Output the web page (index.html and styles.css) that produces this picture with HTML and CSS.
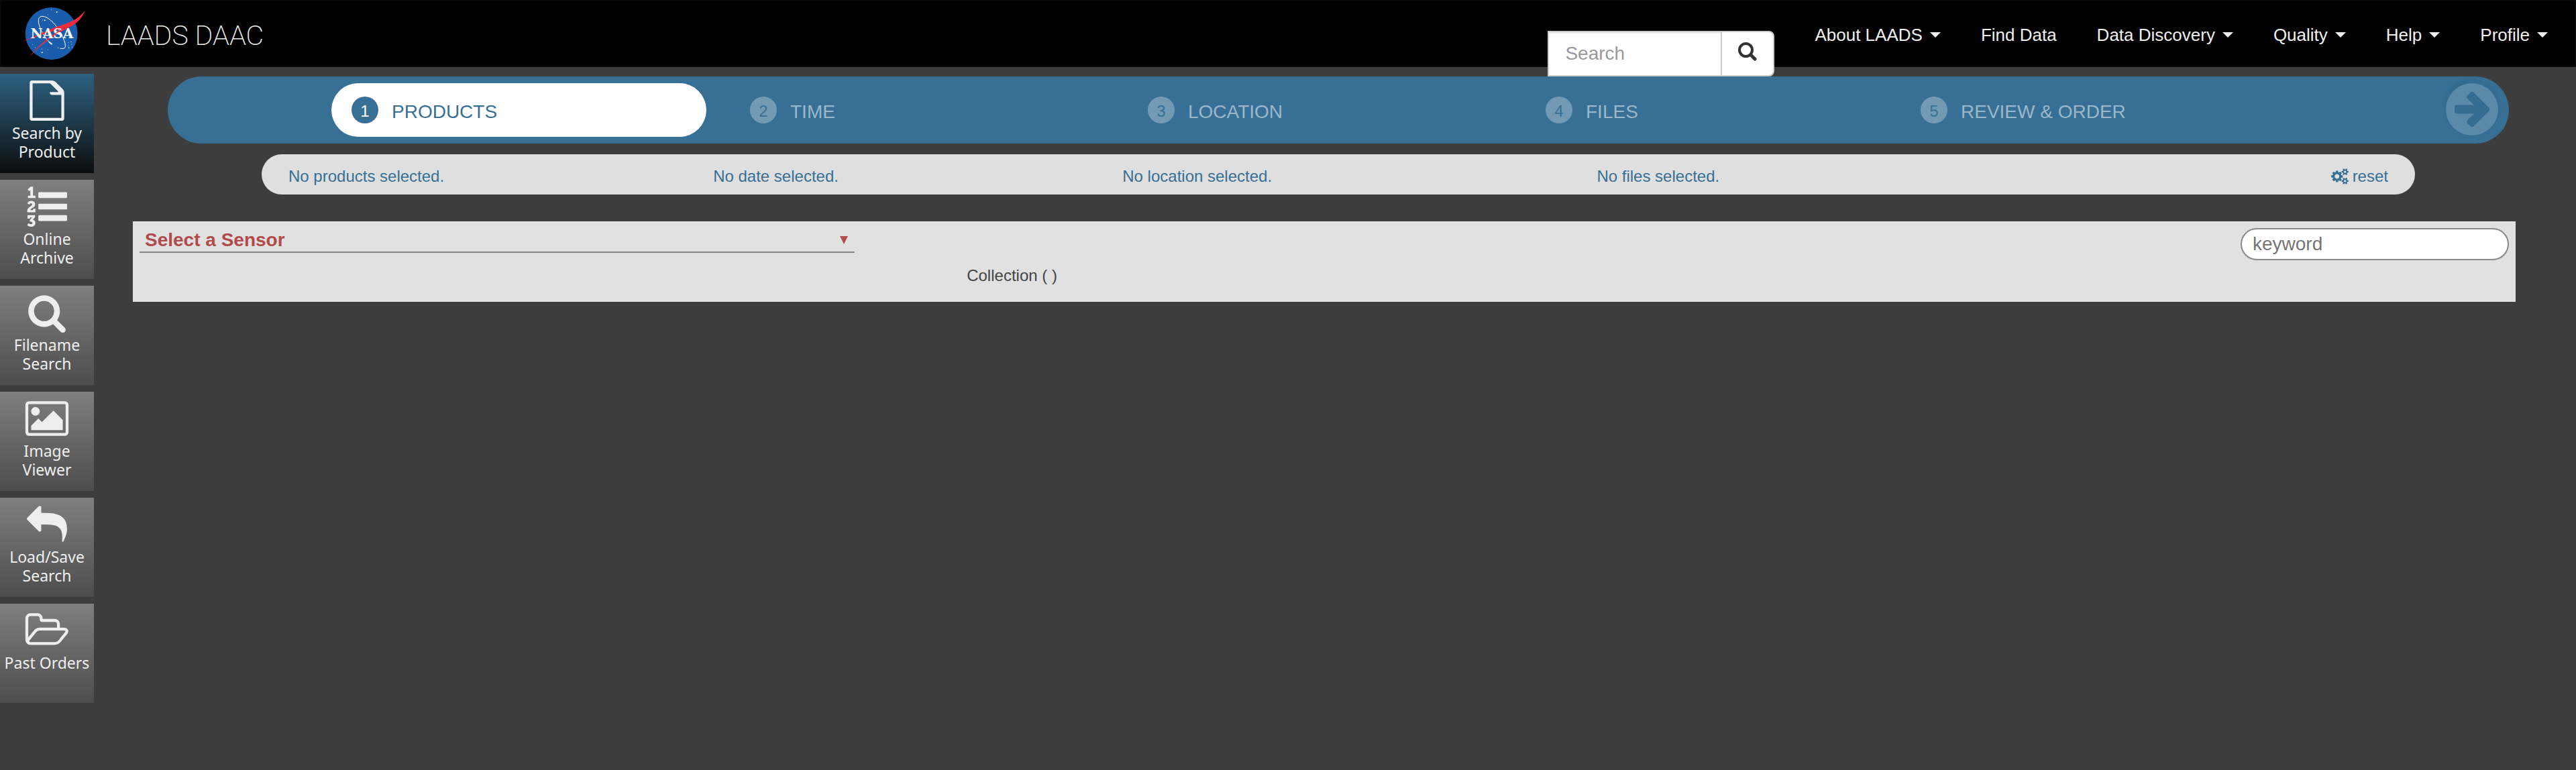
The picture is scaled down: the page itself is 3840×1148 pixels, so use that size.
FILE: index.html
```html
<!DOCTYPE html>
<html lang="en">
<head>
<meta charset="utf-8">
<title>LAADS DAAC</title>
<link rel="stylesheet" href="styles.css">
</head>
<body>
<header class="site-header">
  <a class="brand" href="#">
    <svg class="brand-logo" viewBox="0 0 330 288" aria-hidden="true">
      <circle cx="152" cy="144" r="117" fill="#1b5dad"/>
      <g fill="#fff">
        <circle cx="176" cy="48" r="3"/><circle cx="152" cy="38" r="1.500"/><circle cx="136" cy="60" r="1.500"/><circle cx="131" cy="71" r="1.500"/><circle cx="122" cy="85" r="3"/><circle cx="112" cy="84" r="1.500"/><circle cx="110" cy="229" r="3"/><circle cx="109" cy="213" r="1.500"/><circle cx="68" cy="194" r="1.500"/><circle cx="80" cy="206" r="1.500"/><circle cx="240" cy="181" r="2"/><circle cx="230" cy="208" r="2.500"/><circle cx="243" cy="192" r="1.500"/><circle cx="228" cy="184" r="1.500"/><circle cx="136" cy="216" r="1.500"/><circle cx="182" cy="208" r="2"/><circle cx="245" cy="205" r="1.500"/><circle cx="228" cy="198" r="1.500"/>
      </g>
      <path d="M152 193C118 160 92 112 94 84C97 52 138 68 168 104C196 138 220 190 213 206C210 213 200 212 190 210" fill="none" stroke="#fff" stroke-width="3"/>
      <path d="M141 181l14 11" stroke="#fff" stroke-width="5"/>
      <path d="M21 180C80 156 115 138 172 115C230 96 270 84 303 39C288 82 256 106 220 122C150 158 100 198 53 249C100 190 150 150 206 122C140 136 80 160 21 180Z" fill="#ee2c3e"/>
      <text class="brand-mark" x="154" y="166" text-anchor="middle">NASA</text>
      <path d="M160 150L206 122L232 112" fill="none" stroke="#ee2c3e" stroke-width="4"/>
    </svg>
    <span class="brand-name">LAADS DAAC</span>
  </a>
  <form class="site-search" role="search">
    <input class="site-search-input" type="text" placeholder="Search" aria-label="Search">
    <button class="site-search-button" type="button" aria-label="Submit search">
      <svg viewBox="0 0 28 28" width="28" height="28" fill="none" stroke="#333"><circle cx="11.500" cy="11.500" r="9.500" stroke-width="4"/><path d="M19 19l6 6" stroke-width="5" stroke-linecap="round"/></svg>
    </button>
  </form>
  <nav class="site-nav" aria-label="Main">
    <a class="site-nav-link" href="#">About LAADS<span class="caret"></span></a>
    <a class="site-nav-link" href="#">Find Data</a>
    <a class="site-nav-link" href="#">Data Discovery<span class="caret"></span></a>
    <a class="site-nav-link" href="#">Quality<span class="caret"></span></a>
    <a class="site-nav-link" href="#">Help<span class="caret"></span></a>
    <a class="site-nav-link" href="#">Profile<span class="caret"></span></a>
  </nav>
</header>

<div class="page">
  <nav class="sidebar" aria-label="Tools">
    <a class="tool tool-active" href="#">
      <svg class="tool-icon" viewBox="0 0 1792 1792"><path d="M1596 380q28 28 48 76t20 88v1152q0 40-28 68t-68 28h-1344q-40 0-68-28t-28-68v-1600q0-40 28-68t68-28h896q40 0 88 20t76 48zm-572-244v376h376q-10-29-22-41l-313-313q-12-12-41-22zm512 1528v-1024h-416q-40 0-68-28t-28-68v-416h-768v1536h1280z"/></svg>
      <span>Search by Product</span>
    </a>
    <a class="tool" href="#">
      <svg class="tool-icon" viewBox="0 0 1792 1792"><path d="M381 1620q0 80-54.500 126t-135.500 46q-106 0-172-66l57-88q49 45 106 45 29 0 50.500-14.500t21.500-42.500q0-64-105-56l-26-56q8-10 32.500-43.500t42.500-54 37-38.500v-1q-16 0-48.500 1t-48.500 1v53h-106v-152h333v88l-95 115q51 12 81 49t30 88zm2-627v159h-362q-6-36-6-54 0-51 23.500-93t56.500-68 66-47.500 56.500-43.500 23.500-45q0-25-14.500-38.500t-39.500-13.500q-46 0-81 58l-85-59q24-51 71.500-79.500t105.500-28.500q73 0 123 41.500t50 112.500q0 50-34 91.500t-75 64.500-75.500 50.500-35.500 52.500h127v-60h105zm1409 319v192q0 13-9.500 22.500t-22.500 9.500h-1216q-13 0-22.500-9.500t-9.500-22.500v-192q0-14 9-23t23-9h1216q13 0 22.500 9.500t9.500 22.500zm-1408-899v99h-335v-99h107q0-41 .5-121.500t.5-121.500v-12h-2q-8 17-50 54l-71-76 136-127h106v404h108zm1408 387v192q0 13-9.500 22.500t-22.500 9.500h-1216q-13 0-22.500-9.500t-9.500-22.500v-192q0-14 9-23t23-9h1216q13 0 22.500 9.500t9.500 22.500zm0-512v192q0 13-9.500 22.500t-22.500 9.500h-1216q-13 0-22.500-9.500t-9.500-22.500v-192q0-13 9.500-22.500t22.500-9.500h1216q13 0 22.500 9.500t9.500 22.500z"/></svg>
      <span>Online Archive</span>
    </a>
    <a class="tool" href="#">
      <svg class="tool-icon" viewBox="0 0 1792 1792"><path d="M1216 832q0-185-131.500-316.500t-316.500-131.500-316.500 131.500-131.500 316.500 131.500 316.500 316.500 131.500 316.500-131.500 131.500-316.500zm512 832q0 52-38 90t-90 38q-54 0-90-38l-343-342q-179 124-399 124-143 0-273.500-55.500t-225-150-150-225-55.500-273.500 55.500-273.500 150-225 225-150 273.500-55.500 273.500 55.500 225 150 150 225 55.500 273.500q0 220-124 399l343 343q37 37 37 90z"/></svg>
      <span>Filename Search</span>
    </a>
    <a class="tool" href="#">
      <svg class="tool-icon" viewBox="0 0 1792 1792"><path d="M576 576q0 80-56 136t-136 56-136-56-56-136 56-136 136-56 136 56 56 136zm1024 384v448h-1408v-192l320-320 160 160 512-512zm96-704h-1600q-13 0-22.500 9.500t-9.500 22.500v1216q0 13 9.500 22.500t22.500 9.500h1600q13 0 22.500-9.500t9.500-22.500v-1216q0-13-9.500-22.500t-22.500-9.500zm160 32v1216q0 66-47 113t-113 47h-1600q-66 0-113-47t-47-113v-1216q0-66 47-113t113-47h1600q66 0 113 47t47 113z"/></svg>
      <span>Image Viewer</span>
    </a>
    <a class="tool" href="#">
      <svg class="tool-icon" viewBox="0 0 1792 1792"><path d="M1792 1120q0 166-127 451-3 7-10.500 24t-13.500 30-13 22q-12 17-28 17-15 0-23.500-10t-8.500-25q0-9 2.500-26.500t2.500-23.500q5-68 5-123 0-101-17.500-181t-48.500-138.500-80-101-105.500-69.500-133-42.500-154-21.500-175.500-6h-224v256q0 26-19 45t-45 19-45-19l-512-512q-19-19-19-45t19-45l512-512q19-19 45-19t45 19 19 45v256h224q713 0 875 403 53 134 53 333z"/></svg>
      <span>Load/Save Search</span>
    </a>
    <a class="tool" href="#">
      <svg class="tool-icon" viewBox="0 0 1792 1792"><path d="M1717 931q0-35-53-35h-1088q-40 0-85.500 21.500t-71.500 52.500l-294 363q-18 24-18 40 0 35 53 35h1088q40 0 86-22t71-53l294-363q18-22 18-39zm-1141-163h768v-160q0-40-28-68t-68-28h-576q-40 0-68-28t-28-68v-64q0-40-28-68t-68-28h-320q-40 0-68 28t-28 68v853l256-315q44-53 116-87.500t140-34.500zm1269 163q0 62-46 120l-295 363q-43 53-116 87.500t-140 34.500h-1088q-92 0-158-66t-66-158v-960q0-92 66-158t158-66h320q92 0 158 66t66 158v32h544q92 0 158 66t66 158v160h192q54 0 99 24.500t67 70.500q15 32 15 68z"/></svg>
      <span>Past Orders</span>
    </a>
  </nav>

  <main class="content">
    <div class="steps">
      <a class="step step-active" href="#"><span class="step-number">1</span><span class="step-label">PRODUCTS</span></a>
      <a class="step" href="#"><span class="step-number">2</span><span class="step-label">TIME</span></a>
      <a class="step" href="#"><span class="step-number">3</span><span class="step-label">LOCATION</span></a>
      <a class="step" href="#"><span class="step-number">4</span><span class="step-label">FILES</span></a>
      <a class="step" href="#"><span class="step-number">5</span><span class="step-label">REVIEW &amp; ORDER</span></a>
      <button class="step-next" type="button" aria-label="Next step">
        <svg viewBox="0 0 1536 1536" width="78" height="78"><circle cx="768" cy="768" r="768" fill="#5b89a8"/><path fill="#346c92" d="M1285 768q0-27-18-45l-91-91-362-362q-18-18-45-18t-45 18l-91 91q-18 18-18 45t18 45l189 189h-502q-26 0-45 19t-19 45v128q0 26 19 45t45 19h502l-189 189q-19 19-19 45t19 45l91 91q18 18 45 18t45-18l362-362 91-91q18-18 18-45z"/></svg>
      </button>
    </div>

    <div class="summary">
      <span>No products selected.</span>
      <span>No date selected.</span>
      <span>No location selected.</span>
      <span>No files selected.</span>
      <a class="reset" href="#"><svg viewBox="-64 0 1920 1792" width="26" height="24"><path d="M832 896q0-106-75-181t-181-75-181 75-75 181 75 181 181 75 181-75 75-181zm768 512q0-52-38-90t-90-38-90 38-38 90q0 53 37.500 90.500t90.500 37.500 90.500-37.500 37.500-90.500zm0-1024q0-52-38-90t-90-38-90 38-38 90q0 53 37.500 90.500t90.500 37.500 90.500-37.500 37.500-90.500zm-384 421v185q0 10-7 19.500t-16 10.500l-155 24q-11 35-32 76 34 48 90 115 7 11 7 20 0 12-7 19-23 30-82.500 89.500t-78.500 59.500q-11 0-21-7l-115-90q-37 19-77 31-11 108-23 155-7 24-30 24h-186q-11 0-20-7.500t-10-17.500l-23-153q-34-10-75-31l-118 89q-7 7-20 7-11 0-21-8-144-133-144-160 0-9 7-19 10-14 41-53t47-61q-23-44-35-82l-152-24q-10-1-17-9.500t-7-19.500v-185q0-10 7-19.500t16-10.500l155-24q11-35 32-76-34-48-90-115-7-11-7-20 0-12 7-20 22-30 82-89t79-59q11 0 21 7l115 90q34-18 77-32 11-108 23-154 7-24 30-24h186q11 0 20 7.500t10 17.500l23 153q34 10 75 31l118-89q8-7 20-7 11 0 21 8 144 133 144 160 0 8-7 19-12 16-42 54t-45 60q23 48 34 82l152 23q10 2 17 10.500t7 19.500zm640 533v140q0 16-149 31-12 27-30 52 51 113 51 138 0 4-4 7-122 71-124 71-8 0-46-47t-52-68q-20 2-30 2t-30-2q-14 21-52 68t-46 47q-2 0-124-71-4-3-4-7 0-25 51-138-18-25-30-52-149-15-149-31v-140q0-16 149-31 13-29 30-52-51-113-51-138 0-4 4-7 4-2 35-20t59-34 30-16q8 0 46 46.500t52 67.500q20-2 30-2t30 2q51-71 92-112l6-2q4 0 124 70 4 3 4 7 0 25-51 138 17 23 30 52 149 15 149 31zm0-1024v140q0 16-149 31-12 27-30 52 51 113 51 138 0 4-4 7-122 71-124 71-8 0-46-47t-52-68q-20 2-30 2t-30-2q-14 21-52 68t-46 47q-2 0-124-71-4-3-4-7 0-25 51-138-18-25-30-52-149-15-149-31v-140q0-16 149-31 13-29 30-52-51-113-51-138 0-4 4-7 4-2 35-20t59-34 30-16q8 0 46 46.500t52 67.500q20-2 30-2t30 2q51-71 92-112l6-2q4 0 124 70 4 3 4 7 0 25-51 138 17 23 30 52 149 15 149 31z"/></svg>reset</a>
    </div>

    <section class="panel">
      <div class="panel-controls">
        <div class="sensor">
          <select class="sensor-select" aria-label="Sensor"><option>Select a Sensor</option></select>
          <svg class="sensor-arrow" viewBox="0 0 12 12" width="12" height="12" aria-hidden="true"><path d="M0 0h12L6 12z"/></svg>
        </div>
        <input class="keyword" type="text" placeholder="keyword" aria-label="keyword">
      </div>
      <p class="collection">Collection ( )</p>
    </section>
  </main>
</div>
</body>
</html>
```

FILE: styles.css
```css
* {
  box-sizing: border-box;
}

body {
  margin: 0;
  background: #3d3d3d;
  color: #444;
  font-family: "Liberation Sans", Arial, sans-serif;
  font-size: 24px;
}

a {
  color: inherit;
  text-decoration: none;
}

input,
button,
select {
  margin: 0;
  font: inherit;
}

svg {
  display: block;
}

/* Header */
.site-header {
  display: flex;
  align-items: flex-start;
  height: 100px;
  padding: 0 10px 0 24px;
  border: 2px solid #080808;
  background: #000;
}

.brand {
  display: flex;
  align-items: center;
  gap: 22px;
  margin-right: auto;
  color: #eee;
}

.brand-logo {
  width: 110px;
  height: 96px;
}

.brand-mark {
  fill: #fff;
  font-family: "DejaVu Serif", serif;
  font-size: 60px;
  font-weight: bold;
}

.brand-name {
  padding-top: 6px;
  font-family: Roboto, "Liberation Sans", sans-serif;
  font-size: 41px;
  font-weight: 200;
  white-space: nowrap;
}

.site-search {
  display: flex;
  position: relative;
  margin: 44px 30px 0 0;
}

.site-search-input {
  width: 260px;
  height: 68px;
  padding: 0 24px;
  border: 2px solid #ccc;
  border-radius: 0;
  background: #fff;
  box-shadow: inset 0 2px 2px rgba(0, 0, 0, 0.08);
  color: #555;
  font-size: 28px;
}

.site-search-input::placeholder {
  color: #999;
  opacity: 1;
}

.site-search-button {
  display: flex;
  align-items: center;
  justify-content: center;
  width: 80px;
  height: 68px;
  margin-left: -2px;
  padding: 0 0 6px;
  border: 2px solid #ccc;
  border-radius: 0 8px 8px 0;
  background: #fff;
}

.site-nav {
  display: flex;
}

.site-nav-link {
  display: flex;
  align-items: center;
  gap: 11px;
  padding: 30px 30px 26px;
  color: #eee;
  font-size: 26px;
  line-height: 40px;
  white-space: nowrap;
}

.caret {
  border: 8px solid transparent;
  border-top-color: #eee;
  border-bottom: 0;
}

/* Page columns */
.page {
  display: flex;
  align-items: flex-start;
}

.sidebar {
  display: flex;
  flex: none;
  flex-direction: column;
  gap: 10px;
  width: 140px;
  padding-top: 10px;
}

.tool {
  display: flex;
  flex-direction: column;
  align-items: center;
  gap: 4px;
  height: 148px;
  padding: 10px 16px 0;
  background: linear-gradient(#7f7f7f, #4d4d4d);
  color: #eee;
  font-family: "Noto Sans", Tahoma, sans-serif;
  font-size: 23px;
  line-height: 28px;
  text-align: center;
}

.tool:last-child {
  padding-right: 0;
  padding-left: 0;
}

.tool-active {
  background: linear-gradient(#2d6080, #1f3c4e 45%, #0d0d0d);
}

.tool-icon {
  flex: none;
  width: 60px;
  height: 60px;
  overflow: visible;
  fill: #eee;
}

.content {
  flex: 1;
  min-width: 0;
  padding: 14px 90px 0 58px;
}

/* Step bar */
.steps {
  display: grid;
  position: relative;
  grid-template-columns: 244fr 594fr 593fr 593fr 559fr 907fr;
  align-items: center;
  height: 100px;
  margin: 0 10px 0 52px;
  border-radius: 50px;
  background: #376f95;
}

.step {
  display: flex;
  align-items: center;
  gap: 20px;
  height: 80px;
  padding-left: 30px;
  color: #9bb7ca;
  font-size: 28px;
  line-height: 40px;
  white-space: nowrap;
}

.step-active {
  grid-column-start: 2;
  margin-right: 35px;
  border-radius: 40px;
  background: #fff;
  color: #376f95;
}

.step-number {
  width: 40px;
  height: 40px;
  padding-top: 2px;
  border-radius: 50%;
  background: #739ab4;
  color: #376f95;
  font-size: 24px;
  text-align: center;
}

.step-label {
  padding-top: 6px;
}

.step-active .step-number {
  background: #376f95;
  color: #fff;
}

.step-next {
  position: absolute;
  top: 10px;
  right: 16px;
  padding: 0;
  border: 0;
  border-radius: 50%;
  background: none;
  box-shadow: 0 -4px 4px 2px #346b91;
}

/* Selection summary */
.summary {
  display: grid;
  grid-template-columns: 633fr 610fr 707fr 1094fr auto;
  align-items: center;
  height: 60px;
  margin: 16px 150px 40px 192px;
  padding: 6px 40px 0;
  border-radius: 30px;
  background: #dfdfdf;
  color: #376f95;
}

.reset {
  display: flex;
  align-items: center;
  gap: 6px;
}

.reset svg {
  fill: #376f95;
}

/* Product panel */
.panel {
  padding: 10px 0 24px;
  background: #e1e1e1;
}

.panel-controls {
  display: flex;
  align-items: flex-start;
  justify-content: space-between;
  padding: 0 10px;
}

.sensor {
  display: grid;
  width: calc(30% + 6px);
  align-items: center;
  border-bottom: 2px solid #888;
}

.sensor-select {
  grid-area: 1 / 1;
  width: 100%;
  height: 35px;
  padding: 0 8px;
  border: 0;
  appearance: none;
  background: none;
  color: #b14b4b;
  font-size: 28px;
  font-weight: bold;
}

.sensor-arrow {
  grid-area: 1 / 1;
  justify-self: end;
  margin-right: 10px;
  fill: #b14b4b;
  pointer-events: none;
}

.keyword {
  width: 400px;
  height: 48px;
  padding: 0 16px;
  border: 2px solid #888;
  border-radius: 24px;
  background: #fff;
  font-size: 28px;
}

.keyword::placeholder {
  color: #757575;
  opacity: 1;
}

.collection {
  margin: 8px 0 0 35%;
  line-height: 30px;
}
```
